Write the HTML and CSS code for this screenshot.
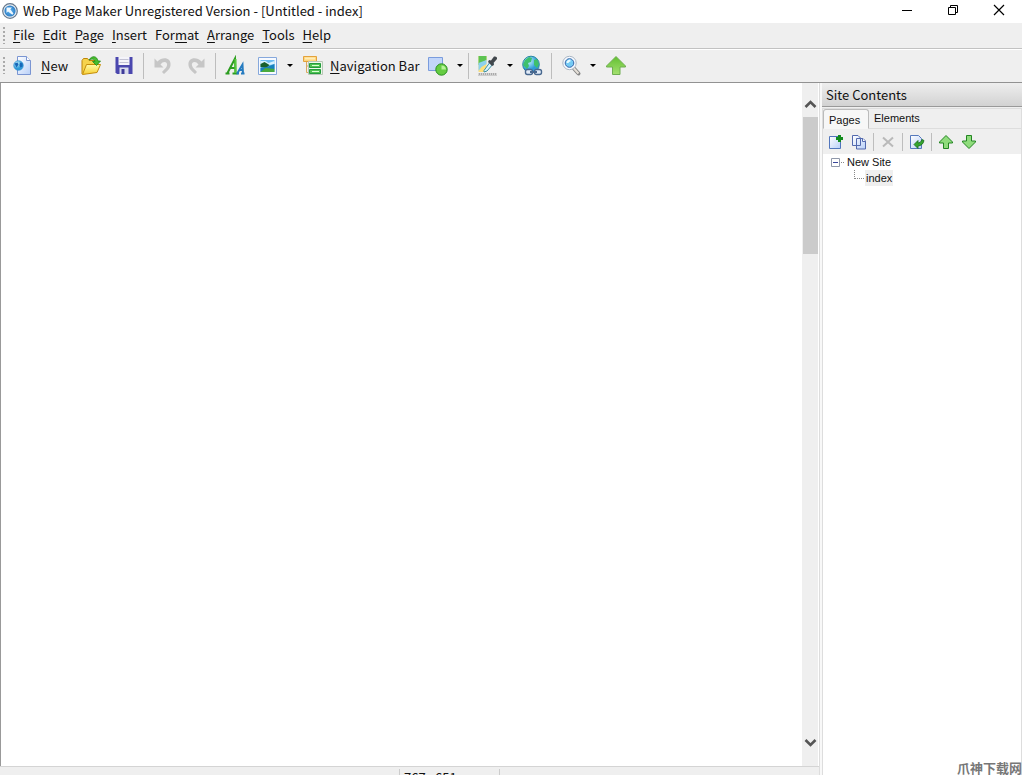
FILE: index.html
```html
<!DOCTYPE html>
<html lang="en">
<head>
<meta charset="utf-8">
<title>Web Page Maker</title>
<link rel="stylesheet" href="styles.css">
</head>
<body>
<div class="window">
  <header class="titlebar">
    <svg class="app-icon" width="16" height="16" viewBox="0 0 16 16"><defs><radialGradient id="app"><stop offset="0" stop-color="#5fb4ee"/><stop offset="1" stop-color="#2f7fc6"/></radialGradient></defs><circle cx="8" cy="8" r="7.3" fill="#e8eef4" stroke="#66788c" stroke-width="1.2"/><circle cx="8" cy="8" r="5.6" fill="url(#app)"/><path d="M4.500 4.500h5.500L8.300 6.200l3.200 4.300-1.200 1.200-4.300-3.200L4.500 10z" fill="#eef8ff"/></svg>
    <h1 class="title">Web Page Maker Unregistered Version - [Untitled - index]</h1>
    <div class="window-buttons">
      <button class="window-button" aria-label="Minimize"><svg width="12" height="12"><path d="M1 6.500h10" stroke="#000"/></svg></button>
      <button class="window-button" aria-label="Restore"><svg width="12" height="12"><path d="M1.500 3.500h7v7h-7zM3.500 3V1.500h7v7H9" fill="none" stroke="#000"/></svg></button>
      <button class="window-button" aria-label="Close"><svg width="12" height="12"><path d="M1 1l10 10M11 1L1 11" stroke="#000" stroke-width="1.200"/></svg></button>
    </div>
  </header>

  <nav class="menubar">
    <span class="grip"></span>
    <button class="menu"><u>F</u>ile</button>
    <button class="menu"><u>E</u>dit</button>
    <button class="menu"><u>P</u>age</button>
    <button class="menu"><u>I</u>nsert</button>
    <button class="menu">For<u>m</u>at</button>
    <button class="menu"><u>A</u>rrange</button>
    <button class="menu"><u>T</u>ools</button>
    <button class="menu"><u>H</u>elp</button>
  </nav>

  <div class="toolbar" role="toolbar" aria-label="Main">
    <span class="grip"></span>
    <button class="tool labelled">
      <svg width="22" height="22" viewBox="0 0 22 22"><defs><linearGradient id="sheet" x2="1" y2="1"><stop stop-color="#fff"/><stop offset="1" stop-color="#b9d0f8"/></linearGradient><radialGradient id="globe" cx=".35" cy=".3"><stop offset="0" stop-color="#c8f6ff"/><stop offset="1" stop-color="#2f9bd8"/></radialGradient></defs><path d="M5.500 1.500h9l4 4v14h-13z" fill="url(#sheet)" stroke="#7a95d2"/><path d="M14.500 1.500v4h4" fill="#fff" stroke="#7a95d2"/><circle cx="6.500" cy="10.500" r="4.800" fill="url(#globe)" stroke="#2a86cc" stroke-width=".6"/><path d="M2.500 8.500l3-1 1 2-2 3zM8 7.500l2.500 1v3l-2 1-1-2z" fill="#1766b8"/></svg>
      <span><u>N</u>ew</span>
    </button>
    <button class="tool" aria-label="Open"><svg width="22" height="22" viewBox="0 0 22 22"><defs><linearGradient id="folder" y2="1" x2="0"><stop stop-color="#fffba8"/><stop offset="1" stop-color="#f8cf30"/></linearGradient></defs><path d="M2 19V5.500l1.500-2h4l1.500 2h8V11" fill="#f6d34c" stroke="#bd8508"/><path d="M2.500 19.500L6.500 9.500h14L17 17.500z" fill="url(#folder)" stroke="#c58d09"/><path d="M9 5c3-5 8-4 9 1h2.500L16.500 10.500 12.500 6.500h2.500C14.500 3.800 12 3.500 9 5z" fill="#49bd2e" stroke="#218a18" stroke-width=".8"/></svg></button>
    <button class="tool" aria-label="Save"><svg width="22" height="22" viewBox="0 0 22 22"><path d="M2.500 2h17v17H4l-1.500-1.500z" fill="#4a47ae"/><path d="M5.500 2h11v8h-11z" fill="#f4f4fa"/><path d="M6.500 4.500h9M6.500 7.500h9" stroke="#c3c3d4"/><path d="M6.500 12.500h9V19h-9z" fill="#d9dcec"/><path d="M8.500 14h3v5h-3z" fill="#3e3b99"/></svg></button>
    <span class="separator"></span>
    <button class="tool" aria-label="Undo" disabled><svg width="22" height="22" viewBox="0 0 22 22"><path d="M2.500 3.500v9h9l-3-3c3-4.500 7.500-2.500 6.500 1-.5 2.500-3 4-5 6.500l2 2c3-3 6-5 6.500-8.500C19.500 3 11 1 5.500 6.500z" fill="#c6c6c6"/></svg></button>
    <button class="tool" aria-label="Redo" disabled><svg width="22" height="22" viewBox="0 0 22 22"><path d="M19.500 3.500v9h-9l3-3c-3-4.500-7.500-2.500-6.500 1 .5 2.500 3 4 5 6.500l-2 2c-3-3-6-5-6.500-8.500C2.500 3 11 1 16.500 6.500z" fill="#c6c6c6"/></svg></button>
    <span class="separator"></span>
    <button class="tool" aria-label="Text"><svg width="22" height="22" viewBox="0 0 22 22"><path d="M1.500 18.500h4M8.500 18.500h5M3.500 18L11 3.500l.500 15M6.500 13h5" fill="none" stroke="#2d9d20" stroke-width="2"/><path d="M11.500 4l0 14" stroke="#58c83c" stroke-width="2"/><path d="M12.500 18.500h2.500M17 18.500h3.500M13.500 18l5-8.500.500 9M15.500 15h3" fill="none" stroke="#257bc0" stroke-width="2"/></svg></button>
    <button class="tool" aria-label="Image"><svg width="22" height="22" viewBox="0 0 22 22"><path d="M1.500 2.500h18v17h-18z" fill="#f7faff" stroke="#86a8dc"/><path d="M3.500 5h14v12h-14z" fill="#6cbdf1"/><path d="M3.500 6h5l3 2 6-2v3l-5 1-4 1-5-1z" fill="#d8f3ff"/><path d="M3.500 9l4-2 5 3-3 3-6-1z" fill="#17602d"/><path d="M3.500 13l6-1 8-3v5l-8 3h-6z" fill="#1882bd"/><path d="M3.500 17l5-4 9 1v3z" fill="#49aa3e"/></svg></button>
    <button class="drop" aria-label="Image options"></button>
    <button class="tool labelled nav-tool">
      <svg width="22" height="22" viewBox="0 0 22 22"><path d="M1.500 1.500h13v5h-13z" fill="#ffd67b" stroke="#e3a23d"/><path d="M3 3.500h10" stroke="#ffedb8" stroke-width="2"/><path d="M4.500 7v10.500H7M4.500 11H7" fill="none" stroke="#d9aa60"/><path d="M6.500 6.500h14v13h-14z" fill="#edf8e8" stroke="#b8c6b7"/><path d="M7.500 8.500h11v4h-11zM7.500 14.500h11v4h-11z" fill="#4fc252" stroke="#239b3c"/><path d="M10 10.500h7M10 16.500h7" stroke="#d8ffd5"/></svg>
      <span><u>N</u>avigation Bar</span>
    </button>
    <button class="tool" aria-label="Shape"><svg width="22" height="22" viewBox="0 0 22 22"><path d="M1.500 2.500h14v13h-14z" fill="#c2d6fa" stroke="#7a9cdd"/><circle cx="14.500" cy="14.500" r="5.700" fill="#65cc42" stroke="#288f20"/><path d="M14.500 10.500v4h4.500a4.500 4.500 0 0 0-4.500-4z" fill="#b8f29a"/></svg></button>
    <button class="drop" aria-label="Shape options"></button>
    <span class="separator"></span>
    <button class="tool" aria-label="Page style"><svg width="22" height="22" viewBox="0 0 22 22"><path d="M1.500 1h8v16h-8z" fill="#ffe07a"/><path d="M1.500 1h8v4l-8 5z" fill="#5cc352"/><path d="M1.500 8l8-3v4l-5 3-3 4z" fill="#8dd1ed"/><path d="M7 15.500l6.500-9 3 2-6.500 7.500-3 1z" fill="#d9f3fb" stroke="#3c91a7"/><path d="M12 5l2 .5 3-4q3.500-.5 3 2.500l-3.500 4 .5 2-2 1-4-4z" fill="#41474c"/><path d="M1 18h19v2.500H1z" fill="#aaa"/><path d="M1 19h19" stroke="#fff" stroke-dasharray="1 1"/></svg></button>
    <button class="drop" aria-label="Page style options"></button>
    <button class="tool" aria-label="Hyperlink"><svg width="22" height="22" viewBox="0 0 22 22"><circle cx="10" cy="9.500" r="8.300" fill="url(#globe)" stroke="#2687a2"/><path d="M4 5l4-3 3 1-1 4-3 1 1 3-2 3-4-4zM13 5l3-1 2 5-2 4-3-3z" fill="#3fc06c"/><rect x="4.500" y="14.500" width="7" height="5" rx="2" fill="#e1ebf8" stroke="#48688f" stroke-width="1.400"/><rect x="13.500" y="14.500" width="7" height="5" rx="2" fill="#e1ebf8" stroke="#48688f" stroke-width="1.400"/><path d="M9 17h7" stroke="#48688f" stroke-width="2"/></svg></button>
    <span class="separator"></span>
    <button class="tool" aria-label="Preview"><svg width="22" height="22" viewBox="0 0 22 22"><path d="M13.500 13l5 5.500" stroke="#858585" stroke-width="4" stroke-linecap="round"/><path d="M13.500 13l5 5.500" stroke="#e6e0d8" stroke-width="2"/><circle cx="9.500" cy="8" r="6.700" fill="#f8fbff" stroke="#aab6c4"/><circle cx="9.500" cy="8" r="4.300" fill="#74caf4" stroke="#3464a9"/><path d="M7.500 8q0-2.500 3-2.500" fill="none" stroke="#e8fbff" stroke-width="2"/></svg></button>
    <button class="drop" aria-label="Preview options"></button>
    <button class="tool" aria-label="Publish"><svg width="22" height="22" viewBox="0 0 22 22"><defs><linearGradient id="green" x2="0" y2="1"><stop stop-color="#62c030"/><stop offset="1" stop-color="#a4e070"/></linearGradient></defs><path d="M12 1.500l9.500 9.500v1H16v7.500H8.500V12H2.500v-1z" fill="url(#green)" stroke="#6eae50"/></svg></button>
  </div>

  <div class="workspace">
    <div class="editor">
      <main class="canvas-row">
        <div class="canvas"></div>
        <div class="scrollbar">
          <button class="scroll-up" aria-label="Scroll up"><svg width="13" height="10"><path d="M1.500 8l5-5 5 5" fill="none" stroke="#555" stroke-width="2.600"/></svg></button>
          <div class="scroll-track"><div class="thumb"></div></div>
          <button class="scroll-down" aria-label="Scroll down"><svg width="13" height="10"><path d="M1.500 2l5 5 5-5" fill="none" stroke="#555" stroke-width="2.600"/></svg></button>
        </div>
      </main>
      <footer class="statusbar"><span class="status-cell"></span><span class="status-cell position">767 , 651</span><span class="status-cell"></span></footer>
    </div>

    <aside class="site">
      <h2 class="site-title">Site Contents</h2>
      <div class="site-body">
        <div class="tabs" role="tablist"><button class="tab active" role="tab" aria-selected="true">Pages</button><button class="tab" role="tab" aria-selected="false">Elements</button></div>
        <div class="site-tools" role="toolbar" aria-label="Pages">
          <button class="small-tool" aria-label="Add page"><svg width="16" height="16"><path d="M1.500 2.500h11v12h-11z" fill="url(#sheet)" stroke="#5276bd"/><path d="M11.500 1v7M8 4.500h7" stroke="#118b1c" stroke-width="3"/></svg></button>
          <button class="small-tool" aria-label="Copy page"><svg width="16" height="16"><path d="M1.500 1.500H7l2.500 2.500v7.500h-8zM5.500 4.500H12l2.500 2.500v8h-9z" fill="url(#sheet)" stroke="#5269ae"/><path d="M11.500 4.500v3h3" fill="#fff" stroke="#5269ae"/></svg></button>
          <span class="separator"></span>
          <button class="small-tool" aria-label="Delete page" disabled><svg width="16" height="16"><path d="M3 3.500l10 9M13 3.500l-10 9" stroke="#b9b9b9" stroke-width="2"/></svg></button>
          <span class="separator"></span>
          <button class="small-tool" aria-label="Page properties"><svg width="16" height="16"><path d="M1.500 1.500h8l3 3v10h-11z" fill="url(#sheet)" stroke="#5579bd"/><path d="M5 10.500l4-4V9q3 0 4-3.500l2 1q-1 5-6 5.500v2.500z" fill="#36a52d" stroke="#166c1c" stroke-width=".8"/></svg></button>
          <span class="separator"></span>
          <button class="small-tool" aria-label="Move up"><svg width="16" height="16"><path d="M8 1.500L14.500 8v1H10.500v5.500h-5V9H1.500V8z" fill="#8fdc7c" stroke="#238522"/></svg></button>
          <button class="small-tool" aria-label="Move down"><svg width="16" height="16"><path d="M8 14.500L14.500 8V7H10.500V1.500h-5V7H1.500v1z" fill="#8fdc7c" stroke="#238522"/></svg></button>
        </div>
        <ul class="tree" role="tree">
          <li class="branch" role="treeitem"><svg width="13" height="9"><path d="M.5.500h8v8h-8z" fill="#fff" stroke="#9098aa"/><path d="M2 4.500h5" stroke="#39469b"/><path d="M10 4.500h3" stroke="#888" stroke-dasharray="1 1"/></svg><span class="node">New Site</span></li>
          <li class="branch child" role="treeitem"><svg width="10" height="16"><path d="M.5 0v9M1 8.500h9" stroke="#888" stroke-dasharray="1 1" fill="none"/></svg><span class="node selected">index</span></li>
        </ul>
      </div>
    </aside>
  </div>
</div>
<div class="watermark" lang="zh">爪神下载网</div>
</body>
</html>
```
FILE: styles.css
```css
* { box-sizing: border-box; }

body {
  margin: 0;
  overflow: hidden;
  background: #efefef;
  color: #111;
  font: 13px/18px "Noto Sans CJK SC", "Noto Sans", sans-serif;
}

button {
  margin: 0;
  padding: 0;
  border: 0;
  background: none;
  color: inherit;
  font: inherit;
}

svg { display: block; flex: none; }
u { text-decoration-thickness: 1px; text-underline-offset: 2px; text-decoration-skip-ink: none; }

.window {
  display: flex;
  flex-direction: column;
  height: calc(100vh + 16px);
}

.titlebar {
  display: flex;
  align-items: center;
  height: 23px;
  padding-left: 2px;
  background: #fff;
}

.app-icon { margin-bottom: 2px; }
.title { flex: 1; margin: 0 0 1px 5px; font-size: 13px; font-weight: 400; }
.window-buttons { display: flex; padding-bottom: 4px; }
.window-button { display: flex; justify-content: center; width: 46px; }

.menubar {
  display: flex;
  align-items: center;
  gap: 8px;
  height: 26px;
  padding: 0 3px 1px;
  border-bottom: 1px solid #c2c2c2;
}

.grip {
  width: 2px;
  height: 17px;
  background: repeating-linear-gradient(#aaa 0 2px, transparent 2px 4px);
}

.toolbar {
  display: flex;
  align-items: center;
  gap: 1px;
  height: 34px;
  padding: 0 3px 1px;
  border-top: 1px solid #fff;
  border-bottom: 1px solid #929292;
}

.tool { display: flex; align-items: center; justify-content: center; width: 32px; height: 28px; }
.tool.labelled { gap: 7px; width: auto; padding: 0 6px; }
.tool.nav-tool { gap: 6px; padding: 0 1px 0 6px; }
.separator { width: 1px; height: 26px; margin: 0 2px; background: #bdbdbd; }
.drop { display: flex; justify-content: center; width: 10px; }
.drop::before { content: ""; border: 3px solid transparent; border-top-color: #000; border-bottom: 0; }

.workspace { display: flex; flex: 1; min-height: 0; }
.editor { display: flex; flex: 1; flex-direction: column; min-width: 0; border-right: 1px solid #ddd; }
.canvas-row { display: flex; flex: 1; border-left: 1px solid #999; background: #fff; }
.canvas { flex: 1; }

.scrollbar { display: flex; flex-direction: column; width: 16px; margin-right: 1px; background: #efefef; }
.scroll-up, .scroll-down { display: flex; justify-content: center; padding-left: 1px; }
.scroll-up { padding-top: 16px; padding-bottom: 8px; }
.scroll-down { padding-bottom: 18px; }
.scroll-track { flex: 1; }
.thumb { height: 137px; margin-left: 1px; background: #cbcbcb; }

.statusbar { display: flex; height: 25px; padding-top: 2px; border-top: 1px solid #d4d4d4; }
.status-cell { flex: 1; padding-left: 4px; }
.status-cell + .status-cell { border-left: 1px solid #ccc; }
.status-cell.position { flex: 0 0 100px; }
.status-cell:first-child { flex: 0 0 399px; }

.site {
  display: flex;
  flex-direction: column;
  width: 202px;
  border-left: 2px solid #f8f8f8;
  background: #efefef;
}

.site-title {
  margin: 0;
  padding: 3px 4px;
  border-bottom: 1px solid #999;
  background: linear-gradient(#eee, #d2d2d2);
  font-size: 13px;
  font-weight: 400;
  line-height: 17px;
}

.site-body {
  display: flex;
  flex: 1;
  flex-direction: column;
  margin-top: 1px;
  border: 1px solid #ddd;
  font: 12px/16px "Liberation Sans", Arial, sans-serif;
}

.tabs { display: flex; align-items: flex-end; }
.tab { flex: 1; padding: 0 5px 2px; border-bottom: 1px solid #ddd; font-size: 11px; text-align: left; }
.tab.active {
  flex: none;
  width: 46px;
  padding: 2px 5px 0;
  border: 1px solid #bbb;
  border-bottom-color: transparent;
  border-radius: 3px 3px 0 0;
  background: #f7f7f7;
  font-size: 11px;
}

.site-tools { display: flex; align-items: center; gap: 1px; height: 25px; padding-left: 2px; }
.small-tool { display: flex; justify-content: center; width: 22px; }
.site-tools .separator { height: 18px; }

.tree { flex: 1; margin: 0; padding: 0 8px; background: #fff; list-style: none; font-size: 11px; }
.branch { display: flex; align-items: center; gap: 2px; height: 16px; }
.branch.child { gap: 1px; padding-left: 23px; }
.node { padding: 0 1px; }
.node.selected { background: #efefef; }

.watermark {
  position: absolute;
  right: 0;
  bottom: -3px;
  color: #777;
  font: 700 13px/20px "Noto Sans CJK SC", sans-serif;
}
```
